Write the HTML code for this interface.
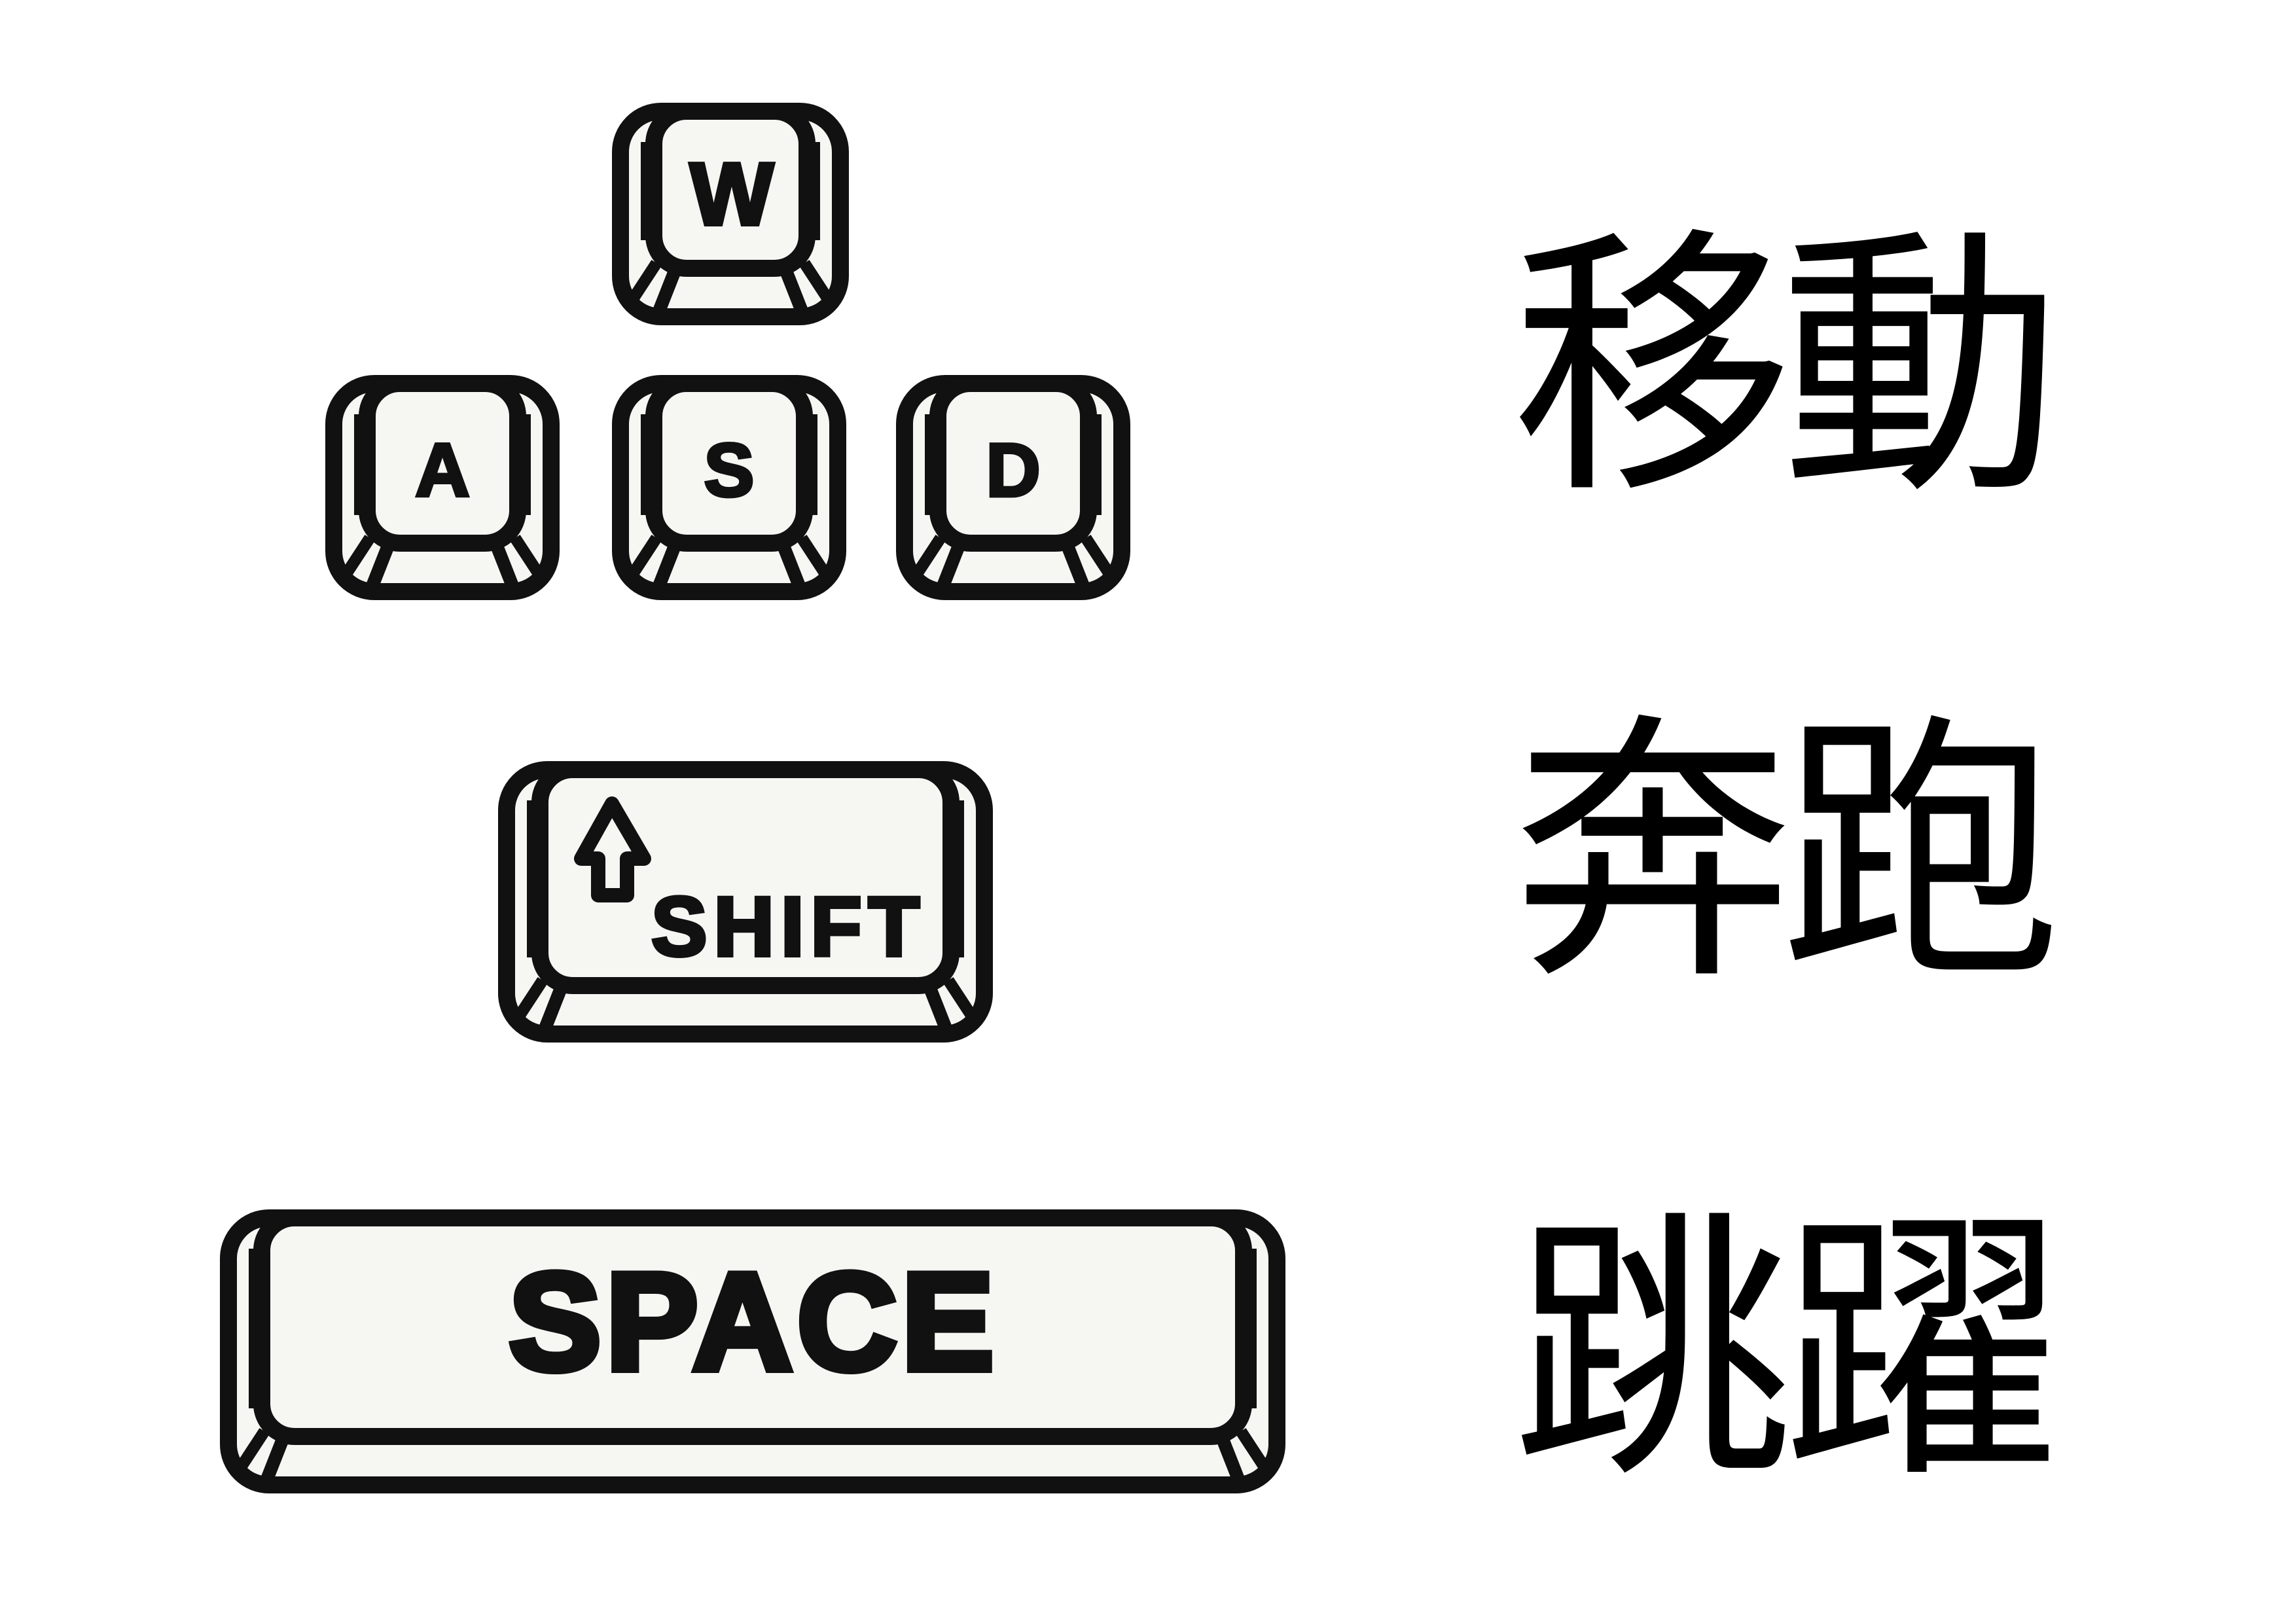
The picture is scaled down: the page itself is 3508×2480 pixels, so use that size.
<!DOCTYPE html>
<html><head><meta charset="utf-8"><style>
html,body{margin:0;padding:0;background:#fff;}
body{width:3508px;height:2480px;position:relative;overflow:hidden;}
svg{position:absolute;left:0;top:0;}
.cj{position:absolute;font-family:"Liberation Sans","Noto Sans CJK TC","Noto Sans CJK SC",sans-serif;font-size:430px;font-weight:400;line-height:1;color:#000;letter-spacing:-20px;white-space:nowrap;}
</style></head><body>
<svg id="s" width="3508" height="2480" viewBox="0 0 3508 2480"></svg>
<div class="cj" style="left:2310px;top:348px;">移動</div>
<div class="cj" style="left:2310px;top:1090px;">奔跑</div>
<div class="cj" style="left:2310px;top:1852px;">跳躍</div>
<script>
var s=document.getElementById('s'),o='';
function k(x,y,w,h){
 var f='#f6f6f3',b='#111';
 o+='<rect x="'+(x+13)+'" y="'+(y+13)+'" width="'+(w-26)+'" height="'+(h-26)+'" rx="62" fill="'+f+'" stroke="'+b+'" stroke-width="26"/>';
 o+='<line x1="'+(x+52)+'" y1="'+(y+60)+'" x2="'+(x+52)+'" y2="'+(y+h-130)+'" stroke="'+b+'" stroke-width="16"/>';
 o+='<line x1="'+(x+w-52)+'" y1="'+(y+60)+'" x2="'+(x+w-52)+'" y2="'+(y+h-130)+'" stroke="'+b+'" stroke-width="16"/>';
 o+='<line x1="'+(x+68)+'" y1="'+(y+h-95)+'" x2="'+(x+32)+'" y2="'+(y+h-40)+'" stroke="'+b+'" stroke-width="18"/>';
 o+='<line x1="'+(x+98)+'" y1="'+(y+h-88)+'" x2="'+(x+72)+'" y2="'+(y+h-22)+'" stroke="'+b+'" stroke-width="20"/>';
 o+='<line x1="'+(x+w-68)+'" y1="'+(y+h-95)+'" x2="'+(x+w-32)+'" y2="'+(y+h-40)+'" stroke="'+b+'" stroke-width="18"/>';
 o+='<line x1="'+(x+w-98)+'" y1="'+(y+h-88)+'" x2="'+(x+w-72)+'" y2="'+(y+h-22)+'" stroke="'+b+'" stroke-width="20"/>';
 o+='<rect x="'+(x+64)+'" y="'+(y+13)+'" width="'+(w-128)+'" height="'+(h-100)+'" rx="50" fill="'+f+'" stroke="'+b+'" stroke-width="26"/>';
}
function t(x,y,str,sz,extra){o+='<text x="'+x+'" y="'+y+'" text-anchor="middle" font-family="Liberation Sans,sans-serif" font-weight="bold" font-size="'+sz+'" fill="#111" '+(extra||'')+'>'+str+'</text>';}
k(935,157,362,340); t(1118,343,'W',135,'stroke="#111" stroke-width="6"');
k(497,573,358,344); t(676,758,'A',115,'stroke="#111" stroke-width="5"');
k(935,573,358,344); t(1114,758,'S',115,'stroke="#111" stroke-width="5"');
k(1369,573,358,344); t(1548,758,'D',115,'stroke="#111" stroke-width="5"');
k(761,1163,756,430);
o+='<path d="M935 1228 L888 1312 L914 1312 L914 1368 L958 1368 L958 1312 L984 1312 Z" fill="none" stroke="#111" stroke-width="22" stroke-linejoin="round"/>';
t(1205,1460,'SHIFT',128,'letter-spacing="10" stroke="#111" stroke-width="6"');
k(336,1848,1628,434);
t(1152,2092,'SPACE',210,'letter-spacing="8" stroke="#111" stroke-width="12"');
s.innerHTML=o;
</script>
</body></html>
